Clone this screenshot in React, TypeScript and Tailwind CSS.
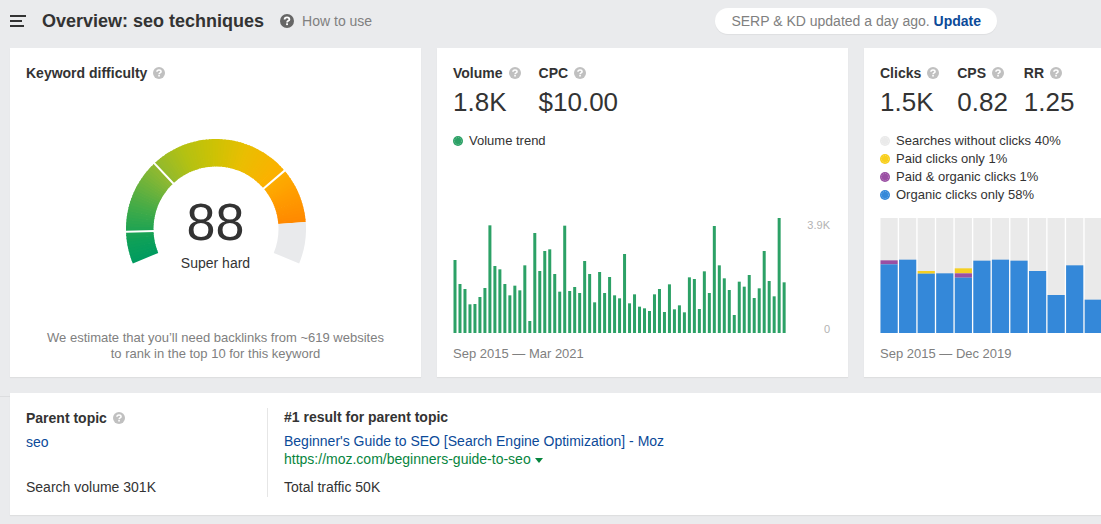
import React from "react";

const volumes = [
  219, 147, 132, 86, 87, 108, 135, 323, 201, 191, 147, 113, 142, 128, 203, 36, 300, 186, 246, 251, 177, 124, 322, 126,
  138, 120, 216, 177, 92, 183, 120, 168, 113, 104, 237, 89, 116, 79, 74, 66, 116, 132, 63, 146, 71, 83, 62, 167, 162,
  72, 185, 120, 321, 203, 164, 129, 54, 154, 139, 174, 105, 134, 246, 156, 110, 345, 152,
];

// organic, paid & organic, paid only
const clicks = [
  [206, 12, 0],
  [220, 0, 0],
  [178, 0, 8],
  [179, 0, 0],
  [166, 13, 15],
  [217, 0, 0],
  [220, 0, 0],
  [217, 0, 0],
  [186, 0, 0],
  [114, 0, 0],
  [203, 0, 0],
  [100, 0, 0],
  [174, 0, 0],
  [192, 0, 0],
  [150, 0, 0],
  [210, 0, 0],
  [186, 0, 0],
  [198, 0, 0],
];

const gaugeStops: [number, number[]][] = [
  [0, [0, 155, 95]],
  [14, [14, 160, 88]],
  [40, [72, 172, 70]],
  [66, [140, 184, 50]],
  [90, [180, 193, 18]],
  [112, [206, 194, 4]],
  [134, [234, 190, 2]],
  [160, [252, 176, 0]],
  [178, [255, 156, 0]],
  [198, [255, 136, 0]],
];

const gaugeColor = (angle: number) => {
  const i = Math.max(
    1,
    gaugeStops.findIndex(([stop]) => stop >= angle)
  );
  const [a, from] = gaugeStops[i - 1];
  const [b, to] = gaugeStops[i];
  const t = (angle - a) / (b - a);
  return `rgb(${from.map((c, k) => Math.round(c + (to[k] - c) * t)).join(",")})`;
};

// angle is measured clockwise from the lower left end of the arc
const point = (angle: number, r: number) => {
  const rad = ((angle + 157.5) * Math.PI) / 180;
  return `${(90 + r * Math.cos(rad)).toFixed(3)} ${(90 + r * Math.sin(rad)).toFixed(3)}`;
};

const slice = (from: number, to: number) =>
  `M${point(from, 90)}A90 90 0 0 1 ${point(to, 90)}L${point(to, 62.5)}A62.5 62.5 0 0 0 ${point(from, 62.5)}Z`;

// angles where one difficulty level ends and the next begins
const levelMarks = [20.7, 69.3, 162.1];

const Gauge = () => (
  <svg className="w-[180px] h-[126px]" viewBox="0 0 180 126" aria-hidden="true">
    {Array.from({ length: 99 }, (_, i) => (
      <path key={i} d={slice(i * 2, Math.min(i * 2 + 2.6, 198))} fill={gaugeColor(i * 2 + 1)} />
    ))}
    <path d={slice(198, 225)} fill="#e9eaec" />
    {levelMarks.map(a => (
      <path key={a} d={`M${point(a, 61)}L${point(a, 92)}`} stroke="#fff" strokeWidth="2" />
    ))}
  </svg>
);

const HelpIcon = ({ className }: { className: string }) => (
  <svg className={className} viewBox="0 0 14 14" aria-hidden="true">
    <circle cx="7" cy="7" r="7" fill="currentColor" />
    <path
      d="M4.6 5.6C4.6 4.1 5.6 3.4 7 3.4s2.4.8 2.4 2c0 1.5-2.3 1.4-2.3 3"
      fill="none"
      stroke="#fff"
      strokeWidth="1.8"
    />
    <rect x="6.1" y="9.3" width="1.9" height="1.8" fill="#fff" />
  </svg>
);

const Label = ({ children }: { children: React.ReactNode }) => (
  <h2 className="flex items-center gap-[6px] pr-[2px] text-sm leading-[18px] font-bold whitespace-nowrap">
    {children}
    <HelpIcon className="w-3 h-3 shrink-0 text-[#c0c0c0]" />
  </h2>
);

const Metric = ({ label, value }: { label: string; value: string }) => (
  <div>
    <Label>{label}</Label>
    <p className="text-[26px] leading-[40px]">{value}</p>
  </div>
);

const LegendItem = ({ color, children }: { color: string; children: React.ReactNode }) => (
  <li className="flex items-center gap-[6px]">
    <svg className={`w-[10px] h-[10px] ${color}`} viewBox="0 0 10 10" aria-hidden="true">
      <circle cx="5" cy="5" r="5" fill="currentColor" />
      <circle cx="5" cy="5" r="3.5" fill="none" stroke="#fff" strokeOpacity="0.3" strokeDasharray="1 1" />
    </svg>
    {children}
  </li>
);

const Card = ({ children }: { children: React.ReactNode }) => (
  <section className="flex flex-col bg-white px-4 pt-4 pb-[15px] shadow-[0_1px_1px_rgba(0,0,0,0.05)]">
    {children}
  </section>
);

const VolumeChart = () => (
  <div className="mt-auto flex justify-between">
    <svg className="w-[334px] h-[115px]" viewBox="0 0 334 115" role="img" aria-label="Volume trend">
      {volumes.map((v, i) => (
        <rect key={i} x={0.5 + i * 4.987} y={115 - v / 3} width="3" height={v / 3} fill="#2ca166" />
      ))}
    </svg>
    <div className="-mb-[3px] flex flex-col justify-between pr-[2px] text-right text-[11px] leading-[14px] text-[#b3b3b3]">
      <span>3.9K</span>
      <span>0</span>
    </div>
  </div>
);

const ClicksChart = () => (
  <svg
    className="mt-[14px] w-[334px] h-[115px]"
    viewBox="0 0 334 115"
    role="img"
    aria-label="Clicks distribution"
  >
    {clicks.map(([organic, both, paid], i) => {
      const x = 0.5 + i * 18.56;
      const y = 115 - organic / 3;
      return (
        <g key={i}>
          <rect x={x} y="0" width="17.2" height="115" fill="#eaeaea" />
          <rect x={x} y={y - (both + paid) / 3} width="17.2" height={paid / 3} fill="#f5cf22" />
          <rect x={x} y={y - both / 3} width="17.2" height={both / 3} fill="#9a4fa3" />
          <rect x={x} y={y} width="17.2" height={organic / 3} fill="#3488d9" />
        </g>
      );
    })}
  </svg>
);

const App: React.FC = () => {
  return (
    <div className="min-h-screen overflow-x-hidden bg-[#eaebed] font-['Liberation_Sans',Arial,sans-serif] text-[#333]">
      <header className="flex h-12 items-center pb-[6px] pl-[10px] pr-[104px]">
        <button type="button" aria-label="Menu" className="mr-4">
          <svg className="w-4 h-3" viewBox="0 0 16 12" fill="#333" aria-hidden="true">
            <rect width="16" height="2" />
            <rect y="5" width="12" height="2" />
            <rect y="10" width="14" height="2" />
          </svg>
        </button>
        <h1 className="text-lg leading-6 font-bold whitespace-nowrap">Overview: seo techniques</h1>
        <a href="#" className="ml-4 flex items-center gap-2 text-sm whitespace-nowrap text-[#808080]">
          <HelpIcon className="w-[14px] h-[14px] text-[#666]" />
          How to use
        </a>
        <p className="ml-auto rounded-full bg-white px-4 text-sm leading-[26px] whitespace-nowrap text-[#808080] shadow-[0_1px_1px_rgba(0,0,0,0.05)]">
          SERP &amp; KD updated a day ago.{" "}
          <button type="button" className="font-bold text-[#0b4a99]">
            Update
          </button>
        </p>
      </header>

      <main>
        <div className="grid grid-cols-[repeat(3,minmax(411px,1fr))] gap-4 px-[10px]">
          <Card>
            <Label>Keyword difficulty</Label>
            <div className="mt-[57px] grid justify-items-center">
              <div className="col-start-1 row-start-1">
                <Gauge />
              </div>
              <div className="col-start-1 row-start-1 pt-[53px] text-center">
                <p className="text-[52px] leading-[60px]">88</p>
                <p className="text-sm leading-[22px]">Super hard</p>
              </div>
            </div>
            <p className="mt-auto text-center text-[13px] leading-4 text-[#808080]">
              We estimate that you’ll need backlinks from ~619 websites
              <br />
              to rank in the top 10 for this keyword
            </p>
          </Card>

          <Card>
            <div className="flex gap-4">
              <Metric label="Volume" value="1.8K" />
              <Metric label="CPC" value="$10.00" />
            </div>
            <ul className="mt-[10px] text-[13px] leading-[18px]">
              <LegendItem color="text-[#2ca166]">Volume trend</LegendItem>
            </ul>
            <VolumeChart />
            <p className="mt-[13px] text-[13px] leading-4 text-[#808080]">Sep 2015 — Mar 2021</p>
          </Card>

          <Card>
            <div className="flex gap-4">
              <Metric label="Clicks" value="1.5K" />
              <Metric label="CPS" value="0.82" />
              <Metric label="RR" value="1.25" />
            </div>
            <ul className="mt-[10px] text-[13px] leading-[18px]">
              <LegendItem color="text-[#eaeaea]">Searches without clicks 40%</LegendItem>
              <LegendItem color="text-[#f8cf1c]">Paid clicks only 1%</LegendItem>
              <LegendItem color="text-[#9a4fa3]">Paid &amp; organic clicks 1%</LegendItem>
              <LegendItem color="text-[#3488d9]">Organic clicks only 58%</LegendItem>
            </ul>
            <ClicksChart />
            <p className="mt-[13px] text-[13px] leading-4 text-[#808080]">Sep 2015 — Dec 2019</p>
          </Card>
        </div>

        <div className="mt-4 flex">
          <div className="mt-[3px] w-[10px] border-t border-[#dcdddf]"></div>
          <section className="flex flex-1 bg-white px-4 pt-[15px] pb-[18px] text-sm leading-[18px] shadow-[0_1px_1px_rgba(0,0,0,0.05)]">
            <div className="flex w-[242px] shrink-0 flex-col items-start border-r border-[#e6e6e6] py-px">
              <Label>Parent topic</Label>
              <a href="#" className="mt-[6px] text-[#0b4a99]">
                seo
              </a>
              <p className="mt-auto">Search volume 301K</p>
            </div>
            <div className="flex flex-col items-start pb-px pl-4">
              <h2 className="font-bold">#1 result for parent topic</h2>
              <a href="#" className="mt-[6px] text-[#0b4a99]">
                Beginner's Guide to SEO [Search Engine Optimization] - Moz
              </a>
              <button type="button" className="flex items-center gap-1 text-[#07853e]">
                https://moz.com/beginners-guide-to-seo
                <svg className="mt-[2px] w-2 h-[5px]" viewBox="0 0 8 5" fill="currentColor" aria-hidden="true">
                  <path d="M0 0h8L4 5z" />
                </svg>
              </button>
              <p className="mt-[10px]">Total traffic 50K</p>
            </div>
          </section>
        </div>
      </main>
    </div>
  );
};

export default App;
